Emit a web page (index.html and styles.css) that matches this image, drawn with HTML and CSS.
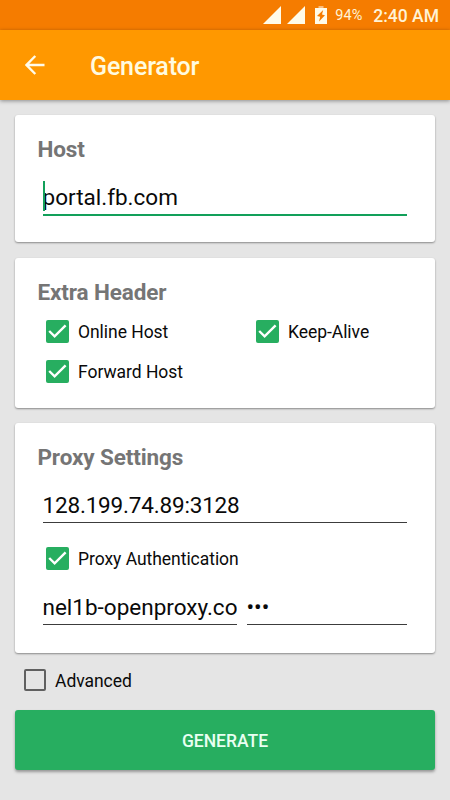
FILE: index.html
```html
<!DOCTYPE html>
<html lang="en">
  <head>
    <meta charset="UTF-8" />
    <meta name="viewport" content="width=device-width, initial-scale=1.0" />
    <title>Generator</title>
    <link rel="stylesheet" href="styles.css">
  </head>
  <body>
    <div class="status-bar">
      <svg class="signal" width="18" height="18" viewBox="0 0 18 18"><path d="M0 18 L18 0 V18 Z" /></svg>
      <svg class="signal" width="18" height="18" viewBox="0 0 18 18"><path d="M0 18 L18 0 V18 Z" /></svg>
      <svg class="battery" width="12" height="18" viewBox="0 0 12 18">
        <path class="cap" d="M3.5 0 H8.5 V2 H3.5 Z" />
        <path d="M0 2 H12 V18 H0 Z" />
        <path class="bolt" d="M8.2 4 L2 10 L5.2 10.8 L4 15.5 L10 9.3 L7 8.4 Z" />
      </svg>
      <span class="percent">94%</span>
      <span class="clock">2:40 AM</span>
    </div>

    <header class="toolbar">
      <svg class="back" width="20" height="20" viewBox="0 0 20 20"><path d="M19.5 10 H2 M10.3 1 L1.5 10 L10.3 19" /></svg>
      <h1>Generator</h1>
    </header>

    <main>
      <section class="card host">
        <h2>Host</h2>
        <div class="field focused">
          <input type="text" value="portal.fb.com" />
          <span class="caret"></span>
        </div>
      </section>

      <section class="card headers">
        <h2>Extra Header</h2>
        <div class="options">
          <div class="check"><svg class="box" width="23" height="23" viewBox="0 0 23 23"><rect width="23" height="23" rx="2" /><path d="M3.2 11 L8.6 16.4 L19.6 5.4" /></svg>Online Host</div>
          <div class="check"><svg class="box" width="23" height="23" viewBox="0 0 23 23"><rect width="23" height="23" rx="2" /><path d="M3.2 11 L8.6 16.4 L19.6 5.4" /></svg>Keep-Alive</div>
          <div class="check"><svg class="box" width="23" height="23" viewBox="0 0 23 23"><rect width="23" height="23" rx="2" /><path d="M3.2 11 L8.6 16.4 L19.6 5.4" /></svg>Forward Host</div>
        </div>
      </section>

      <section class="card proxy">
        <h2>Proxy Settings</h2>
        <div class="field address"><input type="text" value="128.199.74.89:3128" /></div>
        <div class="check auth"><svg class="box" width="23" height="23" viewBox="0 0 23 23"><rect width="23" height="23" rx="2" /><path d="M3.2 11 L8.6 16.4 L19.6 5.4" /></svg>Proxy Authentication</div>
        <div class="login">
          <div class="field user"><input type="text" value="nel1b-openproxy.co" /></div>
          <div class="field pass"><input type="text" value="•••" /></div>
        </div>
      </section>

      <div class="check advanced"><span class="box empty"></span>Advanced</div>

      <button class="generate">GENERATE</button>
    </main>
  </body>
</html>
```
FILE: styles.css
```css
* {
  box-sizing: border-box;
}
body {
  margin: 0;
  height: 800px;
  overflow: hidden;
  background: #e5e5e5;
  font-family: Roboto, sans-serif;
  color: #0a0a0a;
}
.status-bar {
  display: flex;
  align-items: center;
  justify-content: flex-end;
  height: 30px;
  padding: 0 11px 0 0;
  background: #f57c00;
  color: #fff3d6;
}
.signal {
  margin-right: 5.5px;
  fill: #fffbe9;
}
.battery {
  margin-left: 5px;
  fill: #fffbe9;
}
.battery .cap {
  fill: #fbbf80;
}
.battery .bolt {
  fill: #f57c00;
}
.percent {
  margin: 1px 0 0 8px;
  font-size: 14.5px;
}
.clock {
  margin: 2px 0 0 11px;
  font-size: 17.5px;
  font-weight: 500;
}
.toolbar {
  position: relative;
  display: flex;
  align-items: center;
  height: 70px;
  padding-left: 25px;
  background: #ff9800;
  box-shadow: 0 1px 4px rgba(0, 0, 0, 0.4);
}
.back {
  fill: none;
  stroke: #fffbe9;
  stroke-width: 2.4;
}
h1 {
  margin: 3px 0 0 45px;
  font-size: 25px;
  font-weight: 500;
  letter-spacing: -0.15px;
  color: #fffbe0;
}
main {
  display: flex;
  flex-direction: column;
  padding: 15px 15px 0;
}
.card {
  margin-bottom: 15px;
  padding: 21px 28px 0 22.5px;
  background: #fff;
  border-radius: 3px;
  box-shadow: 0 1px 2px rgba(0, 0, 0, 0.4);
}
.host {
  height: 127px;
  margin-bottom: 16px;
}
.headers {
  height: 150px;
}
.proxy {
  height: 230px;
}
h2 {
  margin: 0;
  font-size: 22.5px;
  line-height: 27px;
  font-weight: 700;
  letter-spacing: -0.13px;
  color: #757575;
}
.field {
  position: relative;
  margin-left: 5px;
  border-bottom: 1px solid #3c3c3c;
}
.field input {
  display: block;
  width: 100%;
  height: 34px;
  padding: 0;
  border: 0;
  outline: 0;
  background: none;
  font: 22.5px Roboto, sans-serif;
  color: #0a0a0a;
}
.address input {
  letter-spacing: -0.18px;
}
.focused {
  margin-top: 17px;
  border-bottom: 2px solid #12a05a;
}
.caret {
  position: absolute;
  left: 0;
  top: 1px;
  width: 2px;
  height: 30px;
  background: #12a05a;
}
.check {
  display: flex;
  align-items: center;
  font-size: 17.5px;
  letter-spacing: -0.04px;
  height: 40px;
  padding-top: 2px;
}
.box {
  flex: none;
  margin: -2px 9px 0 0;
}
.box rect {
  fill: #27ae60;
}
.box path {
  fill: none;
  stroke: #fff;
  stroke-width: 2.4;
}
.empty {
  width: 22px;
  height: 22px;
  border: 2px solid #606060;
  border-radius: 2px;
}
.options {
  display: grid;
  grid-template-columns: 210px 1fr;
  margin: 5px 0 0 8.5px;
}
.proxy .field {
  margin-top: 17px;
}
.auth {
  margin: 15px 0 0 8.5px;
}
.login {
  display: flex;
  gap: 10px;
  margin-left: 5px;
}
.proxy .login .field {
  margin: 12px 0 0;
}
.user {
  width: 194px;
}
.pass {
  flex: 1;
}
.advanced {
  margin: -8px 0 10px 9px;
}
.generate {
  height: 60px;
  padding-top: 3px;
  border: 0;
  border-radius: 3px;
  background: #27ae60;
  box-shadow: 0 2px 3px rgba(0, 0, 0, 0.35);
  font: 500 17.5px Roboto, sans-serif;
  color: #e9fff2;
}
```
